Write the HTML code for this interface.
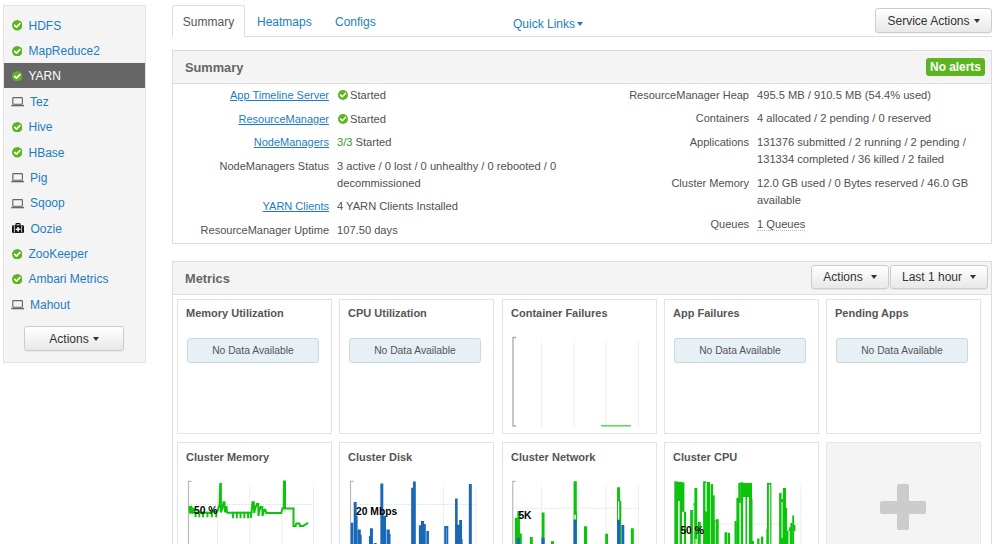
<!DOCTYPE html>
<html><head><meta charset="utf-8"><style>
*{box-sizing:border-box;margin:0;padding:0}
html,body{width:999px;height:544px;overflow:hidden;background:#fff;font-family:"Liberation Sans",sans-serif;color:#555}
div,span,b,a{position:absolute;white-space:nowrap}
#side{left:3px;top:5px;width:143px;height:358px;background:#f4f4f4;border:1px solid #e3e3e3}
.si{left:0;width:141px;height:25px;font-size:12px;color:#1c7dc2;line-height:25px}
.si.act{background:#666;color:#fff}
.si .t{left:25px;top:1.1px}
.btn{border:1px solid #ccc;border-radius:3px;background:linear-gradient(#fff,#e8e8e8);font-size:12px;color:#333;text-align:center;box-shadow:0 1px 1px rgba(0,0,0,.06)}
.caret{position:relative;display:inline-block;width:0;height:0;border-left:3.5px solid transparent;border-right:3.5px solid transparent;border-top:4px solid #333;vertical-align:middle;margin-left:4px;top:-1px}
.tab{top:6.7px;font-size:12px;color:#1c7dc2;line-height:31px}
.panel{border:1px solid #ddd;background:#fff}
.ph{left:0;top:0;right:0;background:#f4f4f4;border-bottom:1px solid #ddd}
.ph b{left:12px;font-size:12.8px;color:#666}
.lab{text-align:right;font-size:11px;color:#505050;line-height:17px}
.val{font-size:11.15px;color:#505050;line-height:17px}
a{position:static!important;color:#1c7dc2;text-decoration:underline}
.val span,.val br{position:static}
.card{width:155px;height:135px;border:1px solid #e3e3e3;background:#fff}
.ct{left:8px;top:7.5px;font-size:11px;font-weight:bold;color:#555}
.nd{left:9px;top:38px;width:132px;height:25px;background:#e6f0f5;border:1px solid #c6dae4;border-radius:3px;font-size:10.3px;color:#555;text-align:center;line-height:23px}
svg{position:absolute}
</style></head><body>
<div id="side">
<div class="si" style="top:6.6px">
<svg style="left:7.5px;top:7.6px" width="10.5" height="10.5" viewBox="0 0 11 11"><circle cx="5.5" cy="5.5" r="5.5" fill="#5cb51d"/><path d="M2.8 5.6 L4.7 7.4 L8.2 3.8" stroke="#fff" stroke-width="1.8" fill="none" stroke-linecap="round" stroke-linejoin="round"/></svg>
<span class="t" style="left:24.5px">HDFS</span>
</div>
<div class="si" style="top:32.0px">
<svg style="left:7.5px;top:7.6px" width="10.5" height="10.5" viewBox="0 0 11 11"><circle cx="5.5" cy="5.5" r="5.5" fill="#5cb51d"/><path d="M2.8 5.6 L4.7 7.4 L8.2 3.8" stroke="#fff" stroke-width="1.8" fill="none" stroke-linecap="round" stroke-linejoin="round"/></svg>
<span class="t" style="left:24.5px">MapReduce2</span>
</div>
<div class="si act" style="top:57.4px">
<svg style="left:7.5px;top:7.6px" width="10.5" height="10.5" viewBox="0 0 11 11"><circle cx="5.5" cy="5.5" r="5.5" fill="#5cb51d"/><path d="M2.8 5.6 L4.7 7.4 L8.2 3.8" stroke="#fff" stroke-width="1.8" fill="none" stroke-linecap="round" stroke-linejoin="round"/></svg>
<span class="t" style="left:24.5px">YARN</span>
</div>
<div class="si" style="top:82.7px">
<svg style="left:7px;top:8.4px" width="14" height="10" viewBox="0 0 14 10"><rect x="1.8" y="0.6" width="9.6" height="6.6" fill="#f4f4f4" stroke="#666" stroke-width="1.15" rx="0.6"/><rect x="0.2" y="7.9" width="12.8" height="1.4" fill="#666"/></svg>
<span class="t" style="left:26px">Tez</span>
</div>
<div class="si" style="top:108.1px">
<svg style="left:7.5px;top:7.6px" width="10.5" height="10.5" viewBox="0 0 11 11"><circle cx="5.5" cy="5.5" r="5.5" fill="#5cb51d"/><path d="M2.8 5.6 L4.7 7.4 L8.2 3.8" stroke="#fff" stroke-width="1.8" fill="none" stroke-linecap="round" stroke-linejoin="round"/></svg>
<span class="t" style="left:24.5px">Hive</span>
</div>
<div class="si" style="top:133.5px">
<svg style="left:7.5px;top:7.6px" width="10.5" height="10.5" viewBox="0 0 11 11"><circle cx="5.5" cy="5.5" r="5.5" fill="#5cb51d"/><path d="M2.8 5.6 L4.7 7.4 L8.2 3.8" stroke="#fff" stroke-width="1.8" fill="none" stroke-linecap="round" stroke-linejoin="round"/></svg>
<span class="t" style="left:24.5px">HBase</span>
</div>
<div class="si" style="top:158.9px">
<svg style="left:7px;top:8.4px" width="14" height="10" viewBox="0 0 14 10"><rect x="1.8" y="0.6" width="9.6" height="6.6" fill="#f4f4f4" stroke="#666" stroke-width="1.15" rx="0.6"/><rect x="0.2" y="7.9" width="12.8" height="1.4" fill="#666"/></svg>
<span class="t" style="left:26px">Pig</span>
</div>
<div class="si" style="top:184.3px">
<svg style="left:7px;top:8.4px" width="14" height="10" viewBox="0 0 14 10"><rect x="1.8" y="0.6" width="9.6" height="6.6" fill="#f4f4f4" stroke="#666" stroke-width="1.15" rx="0.6"/><rect x="0.2" y="7.9" width="12.8" height="1.4" fill="#666"/></svg>
<span class="t" style="left:26px">Sqoop</span>
</div>
<div class="si" style="top:209.6px">
<svg style="left:8px;top:7.2px" width="12" height="10" viewBox="0 0 12 10"><path d="M4,2.6 V1.2 Q4,0.6 4.6,0.6 H7.4 Q8,0.6 8,1.2 V2.6" fill="none" stroke="#111" stroke-width="1.2"/><rect x="0" y="2.2" width="12" height="7.8" rx="1.3" fill="#111"/><rect x="1.9" y="2.6" width="0.8" height="7" fill="#f4f4f4"/><rect x="9.3" y="2.6" width="0.8" height="7" fill="#f4f4f4"/><rect x="5.3" y="4" width="1.5" height="4.6" fill="#fff"/><rect x="3.75" y="5.55" width="4.6" height="1.5" fill="#fff"/></svg>
<span class="t" style="left:26.5px">Oozie</span>
</div>
<div class="si" style="top:235.0px">
<svg style="left:7.5px;top:7.6px" width="10.5" height="10.5" viewBox="0 0 11 11"><circle cx="5.5" cy="5.5" r="5.5" fill="#5cb51d"/><path d="M2.8 5.6 L4.7 7.4 L8.2 3.8" stroke="#fff" stroke-width="1.8" fill="none" stroke-linecap="round" stroke-linejoin="round"/></svg>
<span class="t" style="left:24.5px">ZooKeeper</span>
</div>
<div class="si" style="top:260.4px">
<svg style="left:7.5px;top:7.6px" width="10.5" height="10.5" viewBox="0 0 11 11"><circle cx="5.5" cy="5.5" r="5.5" fill="#5cb51d"/><path d="M2.8 5.6 L4.7 7.4 L8.2 3.8" stroke="#fff" stroke-width="1.8" fill="none" stroke-linecap="round" stroke-linejoin="round"/></svg>
<span class="t" style="left:24.5px">Ambari Metrics</span>
</div>
<div class="si" style="top:285.8px">
<svg style="left:7px;top:8.4px" width="14" height="10" viewBox="0 0 14 10"><rect x="1.8" y="0.6" width="9.6" height="6.6" fill="#f4f4f4" stroke="#666" stroke-width="1.15" rx="0.6"/><rect x="0.2" y="7.9" width="12.8" height="1.4" fill="#666"/></svg>
<span class="t" style="left:26px">Mahout</span>
</div>
<div class="btn" style="left:20px;top:320px;width:100px;height:25px;line-height:24.5px">Actions<span class="caret"></span></div>
</div>

<div style="left:172px;top:36px;width:820px;height:1px;background:#ddd"></div>
<div style="left:172px;top:5px;width:73px;height:32px;border:1px solid #ddd;border-bottom:1px solid #fff;background:#fff;font-size:12px;color:#555;text-align:center;line-height:33.5px;border-radius:2px 2px 0 0">Summary</div>
<div class="tab" style="left:257px">Heatmaps</div>
<div class="tab" style="left:335px">Configs</div>
<div class="tab" style="left:513px;top:9.2px">Quick Links<span class="caret" style="border-top-color:#1c7dc2;margin-left:2px"></span></div>
<div class="btn" style="left:875px;top:8px;width:117px;height:25px;line-height:24.5px">Service Actions<span class="caret"></span></div>

<div class="panel" style="left:172px;top:50px;width:820px;height:194px">
<div class="ph" style="height:33px"><b style="top:9px">Summary</b>
<div style="left:753px;top:7px;width:59px;height:18px;background:#5cb51e;border-radius:3px;color:#fff;font-weight:bold;font-size:11.9px;line-height:18px;text-align:center">No alerts</div></div>
</div>
<div class="lab" style="right:670px;top:86.5px"><a>App Timeline Server</a></div>
<svg style="left:337.5px;top:90px" width="10" height="10" viewBox="0 0 11 11"><circle cx="5.5" cy="5.5" r="5.5" fill="#5cb51d"/><path d="M2.8 5.6 L4.7 7.4 L8.2 3.8" stroke="#fff" stroke-width="1.8" fill="none" stroke-linecap="round" stroke-linejoin="round"/></svg>
<div class="val" style="left:350px;top:86.5px">Started</div>
<div class="lab" style="right:670px;top:110.5px"><a>ResourceManager</a></div>
<svg style="left:337.5px;top:114px" width="10" height="10" viewBox="0 0 11 11"><circle cx="5.5" cy="5.5" r="5.5" fill="#5cb51d"/><path d="M2.8 5.6 L4.7 7.4 L8.2 3.8" stroke="#fff" stroke-width="1.8" fill="none" stroke-linecap="round" stroke-linejoin="round"/></svg>
<div class="val" style="left:350px;top:110.5px">Started</div>
<div class="lab" style="right:670px;top:133.5px"><a>NodeManagers</a></div>
<div class="val" style="left:337px;top:133.5px"><span style="position:static;color:#36972b">3/3</span> Started</div>
<div class="lab" style="right:670px;top:157.5px">NodeManagers Status</div>
<div class="val" style="left:337px;top:157.5px">3 active / 0 lost / 0 unhealthy / 0 rebooted / 0<br>decommissioned</div>
<div class="lab" style="right:670px;top:197.5px"><a>YARN Clients</a></div>
<div class="val" style="left:337px;top:197.5px">4 YARN Clients Installed</div>
<div class="lab" style="right:670px;top:221.5px">ResourceManager Uptime</div>
<div class="val" style="left:337px;top:221.5px">107.50 days</div>
<div class="lab" style="right:250px;top:86.5px">ResourceManager Heap</div>
<div class="val" style="left:757px;top:86.5px">495.5 MB / 910.5 MB (54.4% used)</div>
<div class="lab" style="right:250px;top:109.5px">Containers</div>
<div class="val" style="left:757px;top:109.5px">4 allocated / 2 pending / 0 reserved</div>
<div class="lab" style="right:250px;top:133.5px">Applications</div>
<div class="val" style="left:757px;top:133.5px">131376 submitted / 2 running / 2 pending /<br>131334 completed / 36 killed / 2 failed</div>
<div class="lab" style="right:250px;top:174.5px">Cluster Memory</div>
<div class="val" style="left:757px;top:174.5px">12.0 GB used / 0 Bytes reserved / 46.0 GB<br>available</div>
<div class="lab" style="right:250px;top:215.5px">Queues</div>
<div class="val" style="left:757px;top:215.5px"><span style="position:static;border-bottom:1px dotted #bbb">1 Queues</span></div>
<div class="panel" style="left:172px;top:261px;width:820px;height:300px">
<div class="ph" style="height:33px"><b style="top:9px">Metrics</b></div>
</div>
<div class="btn" style="left:811px;top:265px;width:78px;height:24px;line-height:22px">Actions<span class="caret" style="margin-left:8px"></span></div>
<div class="btn" style="left:890px;top:265px;width:98px;height:24px;line-height:22px">Last 1 hour<span class="caret" style="margin-left:8px"></span></div>
<div class="card" style="left:177px;top:298.5px">
<b class="ct">Memory Utilization</b>
<div class="nd">No Data Available</div>
</div>
<div class="card" style="left:339px;top:298.5px">
<b class="ct">CPU Utilization</b>
<div class="nd">No Data Available</div>
</div>
<div class="card" style="left:502px;top:298.5px">
<b class="ct">Container Failures</b>
</div>
<div class="card" style="left:664px;top:298.5px">
<b class="ct">App Failures</b>
<div class="nd">No Data Available</div>
</div>
<div class="card" style="left:826px;top:298.5px">
<b class="ct">Pending Apps</b>
<div class="nd">No Data Available</div>
</div>
<div class="card" style="left:177px;top:442px;height:140px">
<b class="ct">Cluster Memory</b>
</div>
<div class="card" style="left:339px;top:442px;height:140px">
<b class="ct">Cluster Disk</b>
</div>
<div class="card" style="left:502px;top:442px;height:140px">
<b class="ct">Cluster Network</b>
</div>
<div class="card" style="left:664px;top:442px;height:140px">
<b class="ct">Cluster CPU</b>
</div>
<div class="card" style="left:826px;top:442px;height:140px;background:#f4f4f4;border-color:#e6e6e6"></div>
<div style="left:880px;top:501px;width:46px;height:13px;background:#ccc;border-radius:2px"></div>
<div style="left:897px;top:484px;width:12px;height:46px;background:#ccc;border-radius:2px"></div>
<svg style="left:0;top:0" width="999" height="544" viewBox="0 0 999 544">
<line x1="541.5" y1="342" x2="541.5" y2="426.5" stroke="#dedede" stroke-width="1" stroke-dasharray="1,1"/><line x1="574" y1="342" x2="574" y2="426.5" stroke="#dedede" stroke-width="1" stroke-dasharray="1,1"/><line x1="606.2" y1="342" x2="606.2" y2="426.5" stroke="#dedede" stroke-width="1" stroke-dasharray="1,1"/><line x1="638.4" y1="342" x2="638.4" y2="426.5" stroke="#dedede" stroke-width="1" stroke-dasharray="1,1"/>
<path d="M516,337.5 H513 V426 H516" stroke="#aaa" stroke-width="1.3" fill="none"/>
<line x1="601" y1="425.8" x2="631" y2="425.8" stroke="#62d962" stroke-width="1.6"/>
<line x1="217.5" y1="486" x2="217.5" y2="544" stroke="#dedede" stroke-width="1" stroke-dasharray="1,1"/><line x1="249.7" y1="486" x2="249.7" y2="544" stroke="#dedede" stroke-width="1" stroke-dasharray="1,1"/><line x1="281.8" y1="486" x2="281.8" y2="544" stroke="#dedede" stroke-width="1" stroke-dasharray="1,1"/><line x1="313.5" y1="486" x2="313.5" y2="544" stroke="#dedede" stroke-width="1" stroke-dasharray="1,1"/>
<line x1="188.5" y1="504.5" x2="314" y2="504.5" stroke="#dcdcdc" stroke-width="1" stroke-dasharray="1.2,1.2"/>
<path d="M191.5,481.3 H188.5 V560 H191.5" stroke="#b8b8b8" stroke-width="1.2" fill="none"/>
<polyline points="188.5,507 189.3,507 190.2,513.5 191.2,506 192.4,513.5 193.5,508 194.5,512.8 210,512.8 211,511.5 217.3,511.5 219.6,504.5 220.25,484.1 220.9,484.1 220.9,512.3 222.5,508 223.5,502.3 224.5,502.3 225,512.3 226,507 226.5,507 227,512.3 227.5,512.8 251.5,512.8 252.5,502.3 253.8,502.3 254.2,513 255,509 256.9,504 258.3,504 258.5,516 259,512 260.6,507 262.3,507 262.5,516 263.5,512 264.4,509.8 265.3,509.8 266.3,512.9 281.3,512.9 282.5,508.3 283.8,508.3 284,481.6 285,481.6 285,508.5 293.5,508.5 293.5,526 295.6,526 296.3,523.5 299.4,523.5 300,526 303,526 308,522.9" stroke="#0cc40c" stroke-width="2" fill="none" stroke-linejoin="miter"/>
<rect x="194.6" y="511.8" width="1.9" height="5.499999999999943" fill="#0cc40c"/>
<rect x="198.4" y="511.8" width="1.9" height="5.499999999999943" fill="#0cc40c"/>
<rect x="202.1" y="511.8" width="1.9" height="5.499999999999943" fill="#0cc40c"/>
<rect x="206.5" y="511.8" width="1.9" height="5.499999999999943" fill="#0cc40c"/>
<rect x="210.9" y="511.8" width="1.9" height="5.499999999999943" fill="#0cc40c"/>
<rect x="215.25" y="511.8" width="1.9" height="5.499999999999943" fill="#0cc40c"/>
<rect x="232.1" y="511.8" width="1.9" height="6.499999999999943" fill="#0cc40c"/>
<rect x="235.9" y="511.8" width="1.9" height="6.499999999999943" fill="#0cc40c"/>
<rect x="239.6" y="511.8" width="1.9" height="6.499999999999943" fill="#0cc40c"/>
<rect x="243.4" y="511.8" width="1.9" height="6.499999999999943" fill="#0cc40c"/>
<rect x="247.1" y="511.8" width="1.9" height="6.499999999999943" fill="#0cc40c"/>
<rect x="250" y="511.8" width="1.9" height="6.199999999999989" fill="#0cc40c"/>
<text x="194" y="514.3" font-family="Liberation Sans" font-weight="bold" font-size="10.3px" fill="#000">50 %</text>
<line x1="443.5" y1="486" x2="443.5" y2="544" stroke="#dedede" stroke-width="1" stroke-dasharray="1,1"/><line x1="475.75" y1="486" x2="475.75" y2="544" stroke="#dedede" stroke-width="1" stroke-dasharray="1,1"/>
<line x1="350.5" y1="504.5" x2="476" y2="504.5" stroke="#dcdcdc" stroke-width="1" stroke-dasharray="1.2,1.2"/>
<path d="M353.5,481.3 H350.5 V560 H353.5" stroke="#b8b8b8" stroke-width="1.2" fill="none"/>
<path d="M351.65,560 V523.8 H352.35 V560 M354.65,560 V502.9 H355.70000000000005 V560 M356.65,560 V516.9 H356.35 V560 M358.79999999999995,560 V530.4 H359.85 V560 M359.9,560 V535.65 H360.70000000000005 V560 M369.9,560 V536.9 H370.1 V560 M370.9,560 V529.15 H372.0 V560 M374.9,560 V543.9 H375.70000000000005 V560 M381.29999999999995,560 V484.4 H382.35 V560 M384.15,560 V516.65 H385.1 V560 M387.5,560 V530.4 H388.85 V560 M389.4,560 V534.9 H389.6 V560 M412.5,560 V488.79999999999995 H412.1 V560 M413.9,560 V482.5 H414.85 V560 M419.79999999999995,560 V526.3 H420.85 V560 M421.9,560 V521.9 H423.1 V560 M424.4,560 V524.9 H424.85 V560 M427.29999999999995,560 V531.9 H428.0 V560 M445.15,560 V526.9 H447.35 V560 M456.0,560 V499.4 H456.70000000000005 V560 M458.5,560 V525.65 H458.6 V560 M460.15,560 V520.9 H461.1 V560 M461.4,560 V539.9 H461.6 V560 M469.79999999999995,560 V485.0 H470.85 V560 " stroke="#1a67b8" stroke-width="1.9" fill="none"/>
<text x="356" y="514.7" font-family="Liberation Sans" font-weight="bold" font-size="10.3px" fill="#000">20 Mbps</text>
<line x1="541.5" y1="486" x2="541.5" y2="544" stroke="#dedede" stroke-width="1" stroke-dasharray="1,1"/><line x1="606.25" y1="486" x2="606.25" y2="544" stroke="#dedede" stroke-width="1" stroke-dasharray="1,1"/><line x1="638.4" y1="486" x2="638.4" y2="544" stroke="#dedede" stroke-width="1" stroke-dasharray="1,1"/>
<line x1="512.75" y1="508.25" x2="639" y2="508.25" stroke="#dcdcdc" stroke-width="1" stroke-dasharray="1.2,1.2"/>
<path d="M515.75,481.3 H512.75 V560 H515.75" stroke="#b8b8b8" stroke-width="1.2" fill="none"/>
<path d="M515.8,560 V518.8 H516.7 V560 M518.3,560 V511.9 H519.0 V560 M520.15,560 V534.4 H520.85 V560 M530.8,560 V537.9 H531.85 V560 M542.65,560 V513.4 H543.6 V560 M551.9,560 V542.15 H553.1 V560 M574.5,560 V482.15 H575.85 V560 M575.9,560 V513.8 H576.1 V560 M584.9,560 V527.15 H586.2 V560 M606.15,560 V534.65 H607.1 V560 M618.0,560 V488.15 H619.1 V560 M619.9,560 V501.65 H620.35 V560 M631.8,560 V529.15 H632.85 V560 " stroke="#0cc40c" stroke-width="1.9" fill="none"/>
<path d="M517.65,560 V538.8 H519.0 V560 M542.4,560 V538.8 H543.6 V560 M574.5,560 V520.65 H575.6 V560 M618.0,560 V520.9 H619.1 V560 M622.4,560 V525.9 H623.35 V560 " stroke="#1a67b8" stroke-width="1.9" fill="none"/>
<rect x="574.4" y="514.8" width="1.4" height="4.6" fill="#fff"/><rect x="618" y="501.5" width="1.2" height="18" fill="#fff"/>
<text x="518.4" y="518.8" font-family="Liberation Sans" font-weight="bold" font-size="10.3px" fill="#000">5K</text>
<line x1="736.25" y1="486" x2="736.25" y2="544" stroke="#dedede" stroke-width="1" stroke-dasharray="1,1"/><line x1="800.75" y1="486" x2="800.75" y2="544" stroke="#dedede" stroke-width="1" stroke-dasharray="1,1"/>
<line x1="674.75" y1="524.1" x2="801" y2="524.1" stroke="#dcdcdc" stroke-width="1" stroke-dasharray="1.2,1.2"/>
<path d="M677.75,481.3 H674.75 V560 H677.75" stroke="#b8b8b8" stroke-width="1.2" fill="none"/>
<rect x="674.6" y="481.8" width="7.40" height="68.20" fill="#0cc40c"/>
<rect x="682" y="482.4" width="2.40" height="29.40" fill="#0cc40c"/>
<rect x="683.8" y="511.8" width="2.30" height="38.20" fill="#0cc40c"/>
<rect x="690.2" y="510" width="2.70" height="40.00" fill="#0cc40c"/>
<rect x="692.9" y="503.5" width="1.70" height="46.50" fill="#0cc40c"/>
<rect x="694.4" y="488" width="2.90" height="62.00" fill="#0cc40c"/>
<rect x="697.9" y="521.8" width="2.90" height="28.20" fill="#0cc40c"/>
<rect x="703.1" y="481.3" width="3.20" height="68.70" fill="#0cc40c"/>
<rect x="705.6" y="512" width="1.90" height="38.00" fill="#0cc40c"/>
<rect x="706.9" y="482" width="3.10" height="68.00" fill="#0cc40c"/>
<rect x="710.6" y="484.1" width="2.50" height="65.90" fill="#0cc40c"/>
<rect x="712.5" y="495.4" width="2.20" height="54.60" fill="#0cc40c"/>
<rect x="713.8" y="520.4" width="2.40" height="29.60" fill="#0cc40c"/>
<rect x="715.9" y="519.2" width="2.80" height="30.80" fill="#0cc40c"/>
<rect x="724.5" y="532.25" width="2.50" height="17.75" fill="#0cc40c"/>
<rect x="727.6" y="532.9" width="2.50" height="17.10" fill="#0cc40c"/>
<rect x="734.5" y="521" width="2.25" height="29.00" fill="#0cc40c"/>
<rect x="736.4" y="497.9" width="3.10" height="52.10" fill="#0cc40c"/>
<rect x="738.25" y="482.9" width="2.50" height="67.10" fill="#0cc40c"/>
<rect x="740.5" y="482.25" width="2.50" height="67.75" fill="#0cc40c"/>
<rect x="742.5" y="483" width="6.50" height="14.00" fill="#0cc40c"/>
<rect x="745.5" y="483" width="1.80" height="67.00" fill="#0cc40c"/>
<rect x="748.9" y="482.9" width="3.10" height="67.10" fill="#0cc40c"/>
<rect x="750.7" y="499" width="1.80" height="51.00" fill="#0cc40c"/>
<rect x="752" y="541" width="2.00" height="9.00" fill="#0cc40c"/>
<rect x="757.2" y="538.5" width="2.30" height="11.50" fill="#0cc40c"/>
<rect x="761" y="536.6" width="2.30" height="13.40" fill="#0cc40c"/>
<rect x="766.4" y="529" width="1.85" height="21.00" fill="#0cc40c"/>
<rect x="767" y="482.9" width="4.40" height="67.10" fill="#0cc40c"/>
<rect x="779.1" y="492.9" width="2.50" height="57.10" fill="#0cc40c"/>
<rect x="781" y="499.1" width="3.10" height="50.90" fill="#0cc40c"/>
<rect x="782.9" y="487.9" width="3.10" height="62.10" fill="#0cc40c"/>
<rect x="784.75" y="507.9" width="2.50" height="42.10" fill="#0cc40c"/>
<rect x="786" y="529.75" width="2.50" height="20.25" fill="#0cc40c"/>
<rect x="789.1" y="527.25" width="2.50" height="22.75" fill="#0cc40c"/>
<rect x="790.4" y="523" width="2.20" height="27.00" fill="#0cc40c"/>
<rect x="792.25" y="515.4" width="1.85" height="34.60" fill="#0cc40c"/>
<rect x="792.9" y="525" width="2.50" height="6.00" fill="#0cc40c"/>
<rect x="678.1" y="501" width="1.50" height="49.00" fill="#fff"/>
<rect x="682.6" y="514" width="1.20" height="36.00" fill="#fff"/>
<rect x="693.2" y="504.7" width="0.90" height="45.30" fill="#fff"/>
<rect x="695.5" y="539" width="1.20" height="11.00" fill="#fff"/>
<rect x="714.9" y="521.5" width="0.70" height="28.50" fill="#fff"/>
<rect x="705.4" y="483" width="0.70" height="28.00" fill="#fff"/>
<rect x="739.5" y="503" width="1.25" height="47.00" fill="#fff"/>
<rect x="747.3" y="497.5" width="1.60" height="52.50" fill="#fff"/>
<rect x="768.9" y="484.6" width="1.30" height="65.40" fill="#fff"/>
<rect x="781.6" y="502" width="0.90" height="36.00" fill="#fff"/>
<rect x="787.3" y="509.5" width="0.70" height="21.50" fill="#fff"/>
<rect x="789.1" y="531" width="0.70" height="19.00" fill="#fff"/>
<text x="680.4" y="533.8" font-family="Liberation Sans" font-weight="bold" font-size="10.3px" fill="#000">50 %</text>
</svg>
</body></html>
